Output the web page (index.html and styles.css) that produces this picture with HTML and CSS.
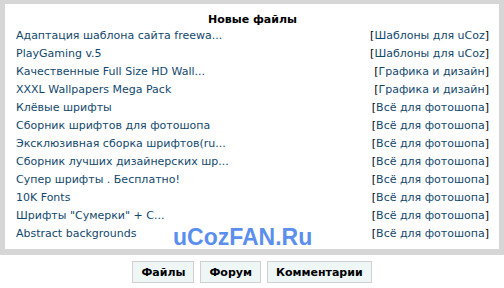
FILE: index.html
```html
<!DOCTYPE html>
<html lang="ru">
<head>
  <meta charset="UTF-8"/>
  <title>Новые файлы</title>
  <link rel="stylesheet" href="styles.css">
</head>
<body>
  <div class="frame">
    <div class="box">
      <div class="title">Новые файлы</div>
      <table class="files">
        <tr><td><a href="#">Адаптация шаблона сайта freewa...</a></td><td class="cat">[<a href="#">Шаблоны для uCoz</a>]</td></tr>
        <tr><td><a href="#">PlayGaming v.5</a></td><td class="cat">[<a href="#">Шаблоны для uCoz</a>]</td></tr>
        <tr><td><a href="#">Качественные Full Size HD Wall...</a></td><td class="cat">[<a href="#">Графика и дизайн</a>]</td></tr>
        <tr><td><a href="#">XXXL Wallpapers Mega Pack</a></td><td class="cat">[<a href="#">Графика и дизайн</a>]</td></tr>
        <tr><td><a href="#">Клёвые шрифты</a></td><td class="cat">[<a href="#">Всё для фотошопа</a>]</td></tr>
        <tr><td><a href="#">Сборник шрифтов для фотошопа</a></td><td class="cat">[<a href="#">Всё для фотошопа</a>]</td></tr>
        <tr><td><a href="#">Эксклюзивная сборка шрифтов(ru...</a></td><td class="cat">[<a href="#">Всё для фотошопа</a>]</td></tr>
        <tr><td><a href="#">Сборник лучших дизайнерских шр...</a></td><td class="cat">[<a href="#">Всё для фотошопа</a>]</td></tr>
        <tr><td><a href="#">Супер шрифты . Бесплатно!</a></td><td class="cat">[<a href="#">Всё для фотошопа</a>]</td></tr>
        <tr><td><a href="#">10K Fonts</a></td><td class="cat">[<a href="#">Всё для фотошопа</a>]</td></tr>
        <tr><td><a href="#">Шрифты "Сумерки" + С...</a></td><td class="cat">[<a href="#">Всё для фотошопа</a>]</td></tr>
        <tr><td><a href="#">Abstract backgrounds</a></td><td class="cat">[<a href="#">Всё для фотошопа</a>]</td></tr>
      </table>
      <div class="watermark">uCozFAN.Ru</div>
    </div>
  </div>
  <div class="tabs">
    <button class="tab">Файлы</button>
    <button class="tab">Форум</button>
    <button class="tab">Комментарии</button>
  </div>
</body>
</html>
```

FILE: styles.css
```css
body {
  margin: 0;
  font-family: "DejaVu Sans", Verdana, sans-serif;
  font-size: 11px;
  color: #000;
  background: #fff;
}
.frame {
  background: #d6d6d6;
  padding: 4px 5px 6px 5px;
}
.box {
  background: #fff;
  padding: 9px 10px 6px 11px;
  position: relative;
}
.title {
  text-align: center;
  font-weight: bold;
  line-height: 14px;
}
.files {
  width: 100%;
  border-collapse: collapse;
}
.files td {
  padding: 0;
  height: 18px;
  line-height: 18px;
  white-space: nowrap;
}
.files td.cat {
  text-align: right;
}
.files a {
  color: #12486d;
  text-decoration: none;
}
.watermark {
  position: absolute;
  left: 168px;
  top: 222px;
  font-family: "Liberation Sans", Arial, sans-serif;
  font-weight: bold;
  font-size: 23px;
  line-height: 1;
  color: #5b8fee;
}
.tabs {
  display: flex;
  justify-content: center;
  gap: 6px;
  padding-top: 6px;
}
.tab {
  font-family: "DejaVu Sans", Verdana, sans-serif;
  font-size: 11px;
  font-weight: bold;
  background: #eef6f6;
  border: 1px solid #d0d0d0;
  height: 22px;
  padding: 0 8px;
  color: #000;
}
```
